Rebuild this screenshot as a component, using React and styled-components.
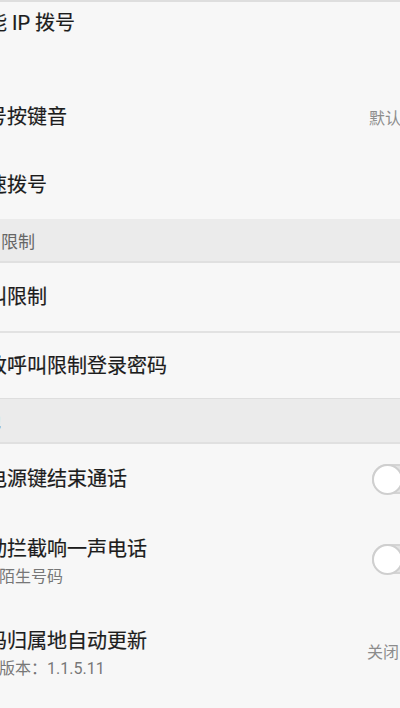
import React from "react";
import styled, { createGlobalStyle } from "styled-components";

const Global = createGlobalStyle`
  html, body { margin: 0; padding: 0; background: #f7f7f7; }
  body { font-family: Roboto, "Noto Sans CJK SC", "Noto Sans", sans-serif; }
`;

const Screen = styled.div`
  width: 400px;
  height: 708px;
  overflow: hidden;
  background: #f7f7f7;
`;

const List = styled.div`
  margin-left: -49px;
  width: 489px;
  display: flex;
  flex-direction: column;
`;

const TopEdge = styled.div`
  height: 2px;
  background: #dedede;
`;

const Row = styled.div`
  box-sizing: border-box;
  height: ${(p) => p.$h}px;
  padding: 0 16px ${(p) => p.$pb || 0}px 16px;
  display: flex;
  align-items: center;
  justify-content: space-between;
  border-bottom: ${(p) => (p.$divider ? "2px solid #e2e2e2" : "none")};
`;

const TextBlock = styled.div`
  display: flex;
  flex-direction: column;
  margin-top: ${(p) => p.$mt || 0}px;
`;

const Title = styled.div`
  font-size: 20px;
  line-height: 28px;
  color: #1c1c1c;
  white-space: nowrap;
  -webkit-text-stroke: 0.2px #1c1c1c;
`;

const Subtitle = styled.div`
  font-size: 16px;
  line-height: 28px;
  color: #777;
  white-space: nowrap;
`;

const Value = styled.div`
  font-size: 16px;
  color: #8c8c8c;
  margin-right: ${(p) => p.$mr}px;
  white-space: nowrap;
`;

const Header = styled.div`
  box-sizing: border-box;
  height: ${(p) => p.$h}px;
  padding: 0 16px;
  display: flex;
  align-items: center;
  background: #ebebeb;
  border-top: ${(p) => (p.$top ? "1px solid #dedede" : "none")};
  border-bottom: 2px solid #e0e0e0;
  font-size: 17px;
  color: #666;
  white-space: nowrap;
`;

const Track = styled.div`
  position: relative;
  box-sizing: border-box;
  width: 52px;
  height: 30px;
  border-radius: 15px;
  background: #e4e4e4;
  border: 2px solid #d4d4d4;
  flex-shrink: 0;
`;

const Thumb = styled.div`
  position: absolute;
  box-sizing: border-box;
  left: -2px;
  top: -2px;
  width: 31px;
  height: 31px;
  border-radius: 50%;
  background: #ffffff;
  border: 2px solid #cfcfcf;
`;

function Switch() {
  return (
    <Track>
      <Thumb />
    </Track>
  );
}

export default function App() {
  return (
    <>
      <Global />
      <Screen>
        <List>
          <TopEdge />
          <Row $h={81} $pb={11}>
            <TextBlock>
              <Title>智能 IP 拨号</Title>
              <Subtitle>关闭</Subtitle>
            </TextBlock>
          </Row>
          <Row $h={68}>
            <TextBlock>
              <Title>拨号按键音</Title>
            </TextBlock>
            <Value $mr={23}>默认</Value>
          </Row>
          <Row $h={68}>
            <TextBlock>
              <Title>快速拨号</Title>
            </TextBlock>
          </Row>
          <Header $h={44}>呼叫限制</Header>
          <Row $h={70} $divider>
            <TextBlock>
              <Title>呼叫限制</Title>
            </TextBlock>
          </Row>
          <Row $h={65}>
            <TextBlock>
              <Title>修改呼叫限制登录密码</Title>
            </TextBlock>
          </Row>
          <Header $h={46} $top>其他</Header>
          <Row $h={69}>
            <TextBlock>
              <Title>按电源键结束通话</Title>
            </TextBlock>
            <Switch />
          </Row>
          <Row $h={92}>
            <TextBlock $mt={8}>
              <Title>自动拦截响一声电话</Title>
              <Subtitle>拦截陌生号码</Subtitle>
            </TextBlock>
            <Switch />
          </Row>
          <Row $h={92}>
            <TextBlock $mt={8}>
              <Title>号码归属地自动更新</Title>
              <Subtitle>当前版本：1.1.5.11</Subtitle>
            </TextBlock>
            <Value $mr={25}>关闭</Value>
          </Row>
        </List>
      </Screen>
    </>
  );
}
